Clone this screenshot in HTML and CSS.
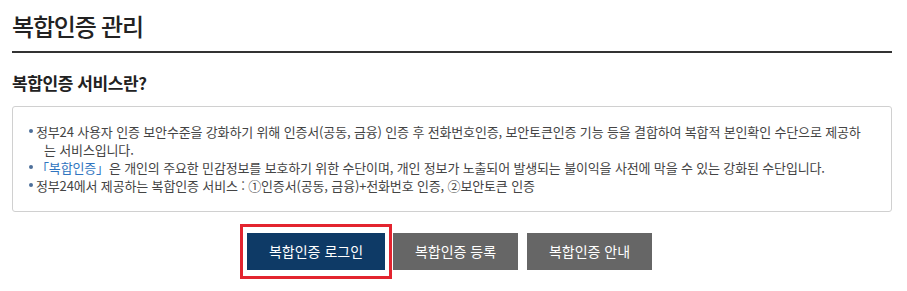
FILE: index.html
```html
<!DOCTYPE html>
<html lang="ko">
<head>
<meta charset="utf-8">
<title>복합인증 관리</title>
<link rel="stylesheet" href="styles.css">
</head>
<body>
<div class="page">
  <h1 class="page-title">복합인증 관리</h1>
  <h2 class="section-title">복합인증 서비스란?</h2>
  <div class="info-box">
    <ul class="info-list">
      <li>정부24 사용자 인증 보안수준을 강화하기 위해 인증서(공동, 금융) 인증 후 전화번호인증, 보안토큰인증 기능 등을 결합하여 복합적 본인확인 수단으로 제공하는 서비스입니다.</li>
      <li><span class="link">「복합인증」</span>은 개인의 주요한 민감정보를 보호하기 위한 수단이며, 개인 정보가 노출되어 발생되는 불이익을 사전에 막을 수 있는 강화된 수단입니다.</li>
      <li>정부24에서 제공하는 복합인증 서비스 : ①인증서(공동, 금융)+전화번호 인증, ②보안토큰 인증</li>
    </ul>
  </div>
  <div class="btn-row">
    <span class="highlight"><button class="btn btn-primary" type="button">복합인증 로그인</button></span>
    <button class="btn btn-gray btn-first-gray" type="button">복합인증 등록</button>
    <button class="btn btn-gray" type="button">복합인증 안내</button>
  </div>
</div>
</body>
</html>
```

FILE: styles.css
```css
* { box-sizing: border-box; }
html, body { margin: 0; padding: 0; background: #fff; }
body {
  font-family: "Noto Sans CJK KR", "Noto Sans", sans-serif;
  color: #333;
}
.page {
  padding: 11px 15px 0 12px;
}
.page-title {
  margin: 0;
  font-size: 24px;
  font-weight: 500;
  line-height: 30px;
  letter-spacing: -1.2px;
  color: #222;
  padding-bottom: 10px;
  border-bottom: 2px solid #333;
}
.section-title {
  margin: 18px 0 0;
  font-size: 17px;
  font-weight: 700;
  line-height: 24px;
  letter-spacing: -0.4px;
  color: #222;
}
.info-box {
  margin-top: 11px;
  border: 1px solid #d0d0d0;
  border-radius: 3px;
  padding: 16px 21px 16px 0;
  height: 106px;
}
.info-list {
  list-style: none;
  margin: 0;
  padding: 0 0 0 31px;
}
.info-list li {
  font-size: 13px;
  line-height: 18px;
  letter-spacing: -0.15px;
  color: #444;
  text-indent: -15px;
}
.info-list li::before {
  content: "";
  display: inline-block;
  width: 4px;
  height: 4px;
  border-radius: 50%;
  background: #4d6f9a;
  margin-right: 3px;
  vertical-align: middle;
  position: relative;
  top: -2px;
}
.link { color: #2f74c0; }
.btn-row {
  display: flex;
  justify-content: center;
  align-items: center;
  margin-top: 12px;
  padding-right: 12px;
}
.highlight {
  display: inline-flex;
  border: 3px solid #e3242f;
  padding: 6px 4px;
}
.btn {
  font-family: "Noto Sans CJK KR", "Noto Sans", sans-serif;
  font-size: 14px;
  letter-spacing: 0;
  color: #fff;
  height: 37px;
  line-height: 37px;
  border: 0;
  padding: 0;
  margin: 0;
  cursor: pointer;
  text-align: center;
}
.btn-primary { background: #0e3a66; width: 138px; }
.btn-gray { background: #666; width: 125px; margin-left: 9px; }
.btn-first-gray { margin-left: 1px; }
```
